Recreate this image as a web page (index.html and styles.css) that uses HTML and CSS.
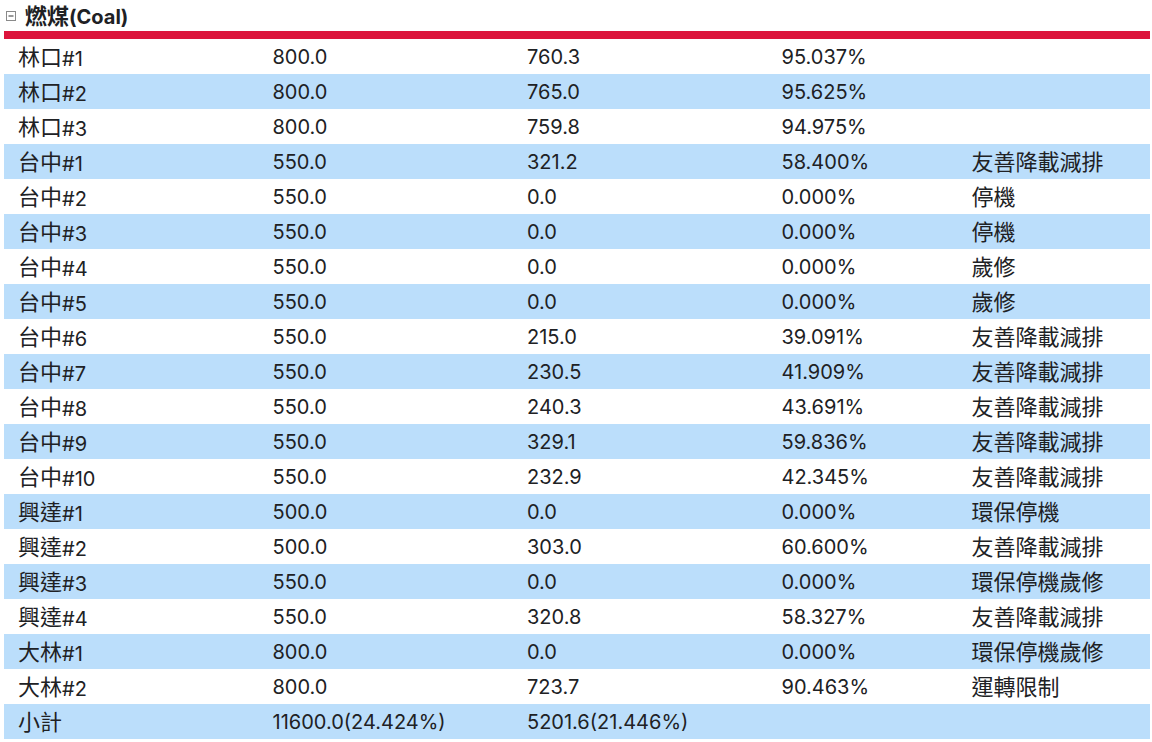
FILE: index.html
```html
<!DOCTYPE html>
<html lang="zh-Hant">
<head>
<meta charset="utf-8">
<title>燃煤(Coal)</title>
<link rel="stylesheet" href="styles.css">
</head>
<body>
<div class="panel">
  <div class="group-head">
    <svg class="toggle" width="10" height="10" viewBox="0 0 10 10"><rect x="0.5" y="0.5" width="9" height="9" fill="#fff" stroke="#8a8a8a"/><line x1="2.5" y1="5" x2="7.5" y2="5" stroke="#333" stroke-width="1"/></svg>
    <span class="group-title"><span class="zh">燃煤</span>(Coal)</span>
  </div>
  <div class="rule"></div>
  <table class="units">
    <colgroup><col class="c1"><col class="c2"><col class="c3"><col class="c4"><col class="c5"></colgroup>
    <tbody>
      <tr><td><span class="zh">林口</span>#1</td><td>800.0</td><td>760.3</td><td>95.037%</td><td></td></tr>
      <tr><td><span class="zh">林口</span>#2</td><td>800.0</td><td>765.0</td><td>95.625%</td><td></td></tr>
      <tr><td><span class="zh">林口</span>#3</td><td>800.0</td><td>759.8</td><td>94.975%</td><td></td></tr>
      <tr><td><span class="zh">台中</span>#1</td><td>550.0</td><td>321.2</td><td>58.400%</td><td><span class="zh">友善降載減排</span></td></tr>
      <tr><td><span class="zh">台中</span>#2</td><td>550.0</td><td>0.0</td><td>0.000%</td><td><span class="zh">停機</span></td></tr>
      <tr><td><span class="zh">台中</span>#3</td><td>550.0</td><td>0.0</td><td>0.000%</td><td><span class="zh">停機</span></td></tr>
      <tr><td><span class="zh">台中</span>#4</td><td>550.0</td><td>0.0</td><td>0.000%</td><td><span class="zh">歲修</span></td></tr>
      <tr><td><span class="zh">台中</span>#5</td><td>550.0</td><td>0.0</td><td>0.000%</td><td><span class="zh">歲修</span></td></tr>
      <tr><td><span class="zh">台中</span>#6</td><td>550.0</td><td>215.0</td><td>39.091%</td><td><span class="zh">友善降載減排</span></td></tr>
      <tr><td><span class="zh">台中</span>#7</td><td>550.0</td><td>230.5</td><td>41.909%</td><td><span class="zh">友善降載減排</span></td></tr>
      <tr><td><span class="zh">台中</span>#8</td><td>550.0</td><td>240.3</td><td>43.691%</td><td><span class="zh">友善降載減排</span></td></tr>
      <tr><td><span class="zh">台中</span>#9</td><td>550.0</td><td>329.1</td><td>59.836%</td><td><span class="zh">友善降載減排</span></td></tr>
      <tr><td><span class="zh">台中</span>#10</td><td>550.0</td><td>232.9</td><td>42.345%</td><td><span class="zh">友善降載減排</span></td></tr>
      <tr><td><span class="zh">興達</span>#1</td><td>500.0</td><td>0.0</td><td>0.000%</td><td><span class="zh">環保停機</span></td></tr>
      <tr><td><span class="zh">興達</span>#2</td><td>500.0</td><td>303.0</td><td>60.600%</td><td><span class="zh">友善降載減排</span></td></tr>
      <tr><td><span class="zh">興達</span>#3</td><td>550.0</td><td>0.0</td><td>0.000%</td><td><span class="zh">環保停機歲修</span></td></tr>
      <tr><td><span class="zh">興達</span>#4</td><td>550.0</td><td>320.8</td><td>58.327%</td><td><span class="zh">友善降載減排</span></td></tr>
      <tr><td><span class="zh">大林</span>#1</td><td>800.0</td><td>0.0</td><td>0.000%</td><td><span class="zh">環保停機歲修</span></td></tr>
      <tr><td><span class="zh">大林</span>#2</td><td>800.0</td><td>723.7</td><td>90.463%</td><td><span class="zh">運轉限制</span></td></tr>
      <tr class="subtotal"><td><span class="zh">小計</span></td><td>11600.0(24.424%)</td><td>5201.6(21.446%)</td><td></td><td></td></tr>
    </tbody>
  </table>
</div>
</body>
</html>
```
FILE: styles.css
```css
html, body {
  margin: 0;
  padding: 0;
  background: #ffffff;
}
body {
  font-family: Inter, "Noto Sans CJK TC", sans-serif;
  color: #202124;
}
.zh {
  font-family: "Noto Sans CJK TC", sans-serif;
  font-size: 22px;
  vertical-align: 1px;
}
.panel {
  padding: 0 2px 0 4px;
}
.group-head {
  height: 31px;
  box-sizing: border-box;
  display: flex;
  align-items: center;
  gap: 9px;
  padding: 0 0 2px 2px;
}
.toggle {
  display: block;
  flex: none;
  margin-top: 3px;
}
.group-title {
  font-size: 20px;
  font-weight: 700;
  line-height: 1.2;
  white-space: nowrap;
}
.group-title .zh {
  vertical-align: 0;
}
.rule {
  height: 8px;
  background: #dc143c;
}
.units {
  width: 100%;
  border-collapse: collapse;
  table-layout: fixed;
  font-size: 20px;
}
.c1, .c2, .c3 { width: 254.5px; }
.c4 { width: 190px; }
.units td {
  height: 35px;
  padding: 0 0 0 14px;
  white-space: nowrap;
  vertical-align: middle;
  line-height: 1;
}
.units tr:nth-child(even) td {
  background: #bbdefb;
}
```
